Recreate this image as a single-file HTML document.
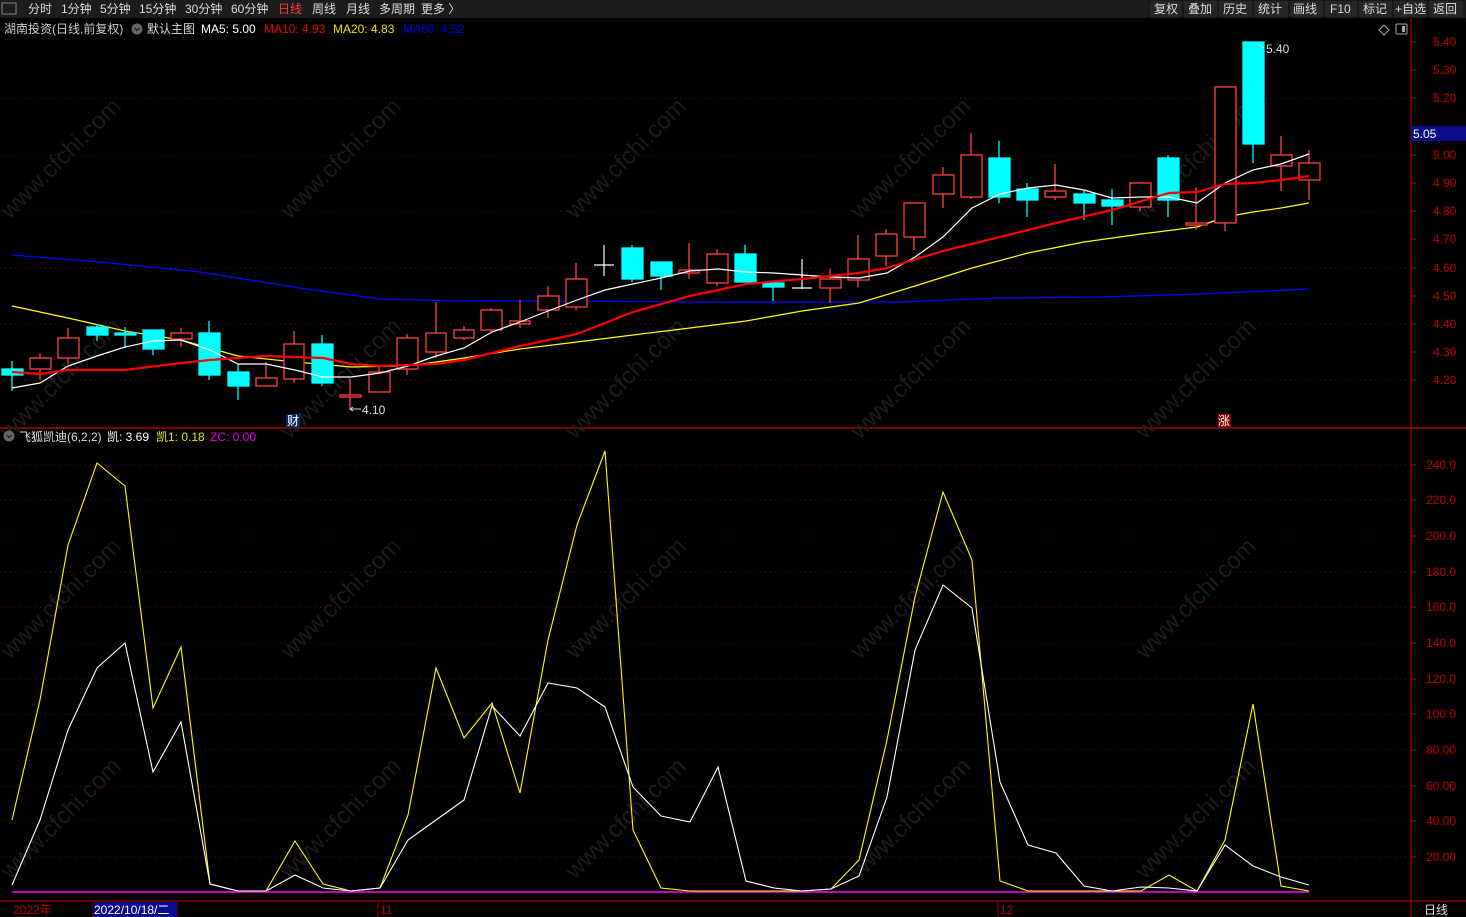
<!DOCTYPE html>
<html><head><meta charset="utf-8"><style>
html,body{margin:0;padding:0;background:#000;width:1466px;height:917px;overflow:hidden;font-family:"Liberation Sans","Noto Sans CJK SC",sans-serif}
svg{display:block}
</style></head><body>
<svg width="1466" height="917" xmlns="http://www.w3.org/2000/svg" font-family="Liberation Sans, Noto Sans CJK SC, sans-serif" font-size="12">
<rect width="1466" height="917" fill="#000"/>
<!-- top bar -->
<rect x="0" y="0" width="1466" height="18" fill="#1c1c1c"/>
<rect x="2" y="3" width="14" height="11" fill="none" stroke="#888"/>
<g fill="#ddd">
<text x="28" y="13">分时</text><text x="61" y="13">1分钟</text><text x="100" y="13">5分钟</text><text x="139" y="13">15分钟</text><text x="185" y="13">30分钟</text><text x="231" y="13">60分钟</text><text x="278" y="13" fill="#ff3b3b">日线</text><text x="312" y="13">周线</text><text x="346" y="13">月线</text><text x="379" y="13">多周期</text><text x="421" y="13">更多 〉</text>
</g>
<g fill="#262626" stroke="#0a0a0a">
<rect x="1149" y="0" width="34" height="18"/><rect x="1183" y="0" width="35" height="18"/><rect x="1218" y="0" width="35" height="18"/><rect x="1253" y="0" width="36" height="18"/><rect x="1289" y="0" width="35" height="18"/><rect x="1324" y="0" width="34" height="18"/><rect x="1358" y="0" width="35" height="18"/><rect x="1393" y="0" width="35" height="18"/><rect x="1428" y="0" width="36" height="18"/>
</g>
<g fill="#ddd"><text x="1154" y="13">复权</text><text x="1188" y="13">叠加</text><text x="1223" y="13">历史</text><text x="1258" y="13">统计</text><text x="1293" y="13">画线</text><text x="1330" y="13">F10</text><text x="1363" y="13">标记</text><text x="1395" y="13">+自选</text><text x="1433" y="13">返回</text></g>
<!-- header line -->
<text x="4" y="33" fill="#ccc">湖南投资(日线,前复权)</text>
<circle cx="137" cy="29" r="5.5" fill="#666"/><path d="M134.5 28l2.5 2.5 2.5-2.5" stroke="#222" stroke-width="1.3" fill="none"/>
<text x="147" y="33" fill="#ddd">默认主图</text>
<text x="201" y="33" fill="#fff">MA5: 5.00</text>
<text x="264" y="33" fill="#e00">MA10: 4.93</text>
<text x="333" y="33" fill="#e6e600">MA20: 4.83</text>
<text x="403" y="33" fill="#0000e6">MA60: 4.52</text>
<path d="M1384 25l5 5-5 5-5-5z" fill="none" stroke="#aaa"/>
<rect x="1396" y="24" width="11" height="10" rx="1" fill="none" stroke="#aaa"/><rect x="1402" y="26" width="3" height="6" fill="#aaa"/>
<!-- axes -->
<line x1="1411" y1="18" x2="1411" y2="917" stroke="#8b0000" stroke-width="1.5"/>
<line x1="0" y1="428" x2="1466" y2="428" stroke="#a00" stroke-width="1.5"/>
<line x1="0" y1="901" x2="1466" y2="901" stroke="#8b0000" stroke-width="1.5"/>
<!-- price grid -->
<g stroke="#8b0000" stroke-dasharray="1 4">
<line x1="0" y1="98" x2="1410" y2="98"/><line x1="0" y1="155" x2="1410" y2="155"/><line x1="0" y1="211" x2="1410" y2="211"/><line x1="0" y1="268" x2="1410" y2="268"/><line x1="0" y1="324" x2="1410" y2="324"/><line x1="0" y1="380" x2="1410" y2="380"/>
<line x1="0" y1="465" x2="1410" y2="465"/><line x1="0" y1="500" x2="1410" y2="500"/><line x1="0" y1="536" x2="1410" y2="536"/><line x1="0" y1="572" x2="1410" y2="572"/><line x1="0" y1="607" x2="1410" y2="607"/><line x1="0" y1="643" x2="1410" y2="643"/><line x1="0" y1="679" x2="1410" y2="679"/><line x1="0" y1="714" x2="1410" y2="714"/><line x1="0" y1="750" x2="1410" y2="750"/><line x1="0" y1="786" x2="1410" y2="786"/><line x1="0" y1="821" x2="1410" y2="821"/><line x1="0" y1="857" x2="1410" y2="857"/>
</g>
<g fill="#c00000" font-size="12">
<text x="1433" y="46">5.40</text><text x="1433" y="74">5.30</text><text x="1433" y="102">5.20</text><text x="1433" y="187">4.90</text><text x="1433" y="159">5.00</text><text x="1433" y="215">4.80</text><text x="1433" y="243">4.70</text><text x="1433" y="272">4.60</text><text x="1433" y="300">4.50</text><text x="1433" y="328">4.40</text><text x="1433" y="356">4.30</text><text x="1433" y="384">4.20</text>
<text x="1426" y="469">240.0</text><text x="1426" y="504">220.0</text><text x="1426" y="540">200.0</text><text x="1426" y="576">180.0</text><text x="1426" y="611">160.0</text><text x="1426" y="647">140.0</text><text x="1426" y="683">120.0</text><text x="1426" y="718">100.0</text><text x="1426" y="754">80.00</text><text x="1426" y="790">60.00</text><text x="1426" y="825">40.00</text><text x="1426" y="861">20.00</text>
</g>
<g stroke="#c00000"><line x1="1411" y1="42" x2="1416" y2="42"/><line x1="1411" y1="70" x2="1416" y2="70"/><line x1="1411" y1="98" x2="1416" y2="98"/><line x1="1411" y1="155" x2="1416" y2="155"/><line x1="1411" y1="183" x2="1416" y2="183"/><line x1="1411" y1="211" x2="1416" y2="211"/><line x1="1411" y1="239" x2="1416" y2="239"/><line x1="1411" y1="268" x2="1416" y2="268"/><line x1="1411" y1="296" x2="1416" y2="296"/><line x1="1411" y1="324" x2="1416" y2="324"/><line x1="1411" y1="352" x2="1416" y2="352"/><line x1="1411" y1="380" x2="1416" y2="380"/>
<line x1="1411" y1="465" x2="1416" y2="465"/><line x1="1411" y1="500" x2="1416" y2="500"/><line x1="1411" y1="536" x2="1416" y2="536"/><line x1="1411" y1="572" x2="1416" y2="572"/><line x1="1411" y1="607" x2="1416" y2="607"/><line x1="1411" y1="643" x2="1416" y2="643"/><line x1="1411" y1="679" x2="1416" y2="679"/><line x1="1411" y1="714" x2="1416" y2="714"/><line x1="1411" y1="750" x2="1416" y2="750"/><line x1="1411" y1="786" x2="1416" y2="786"/><line x1="1411" y1="821" x2="1416" y2="821"/><line x1="1411" y1="857" x2="1416" y2="857"/></g>
<rect x="1411" y="126" width="55" height="15" fill="#0a0a8c"/><text x="1413" y="138" fill="#fff">5.05</text>
<!-- watermarks -->
<g fill="#1c1c1c" font-size="24" >
<text transform="translate(10,220) rotate(-45)">www.cfchi.com</text><text transform="translate(290,220) rotate(-45)">www.cfchi.com</text><text transform="translate(575,220) rotate(-45)">www.cfchi.com</text><text transform="translate(860,220) rotate(-45)">www.cfchi.com</text><text transform="translate(1145,220) rotate(-45)">www.cfchi.com</text>
<text transform="translate(10,440) rotate(-45)">www.cfchi.com</text><text transform="translate(290,440) rotate(-45)">www.cfchi.com</text><text transform="translate(575,440) rotate(-45)">www.cfchi.com</text><text transform="translate(860,440) rotate(-45)">www.cfchi.com</text><text transform="translate(1145,440) rotate(-45)">www.cfchi.com</text>
<text transform="translate(10,660) rotate(-45)">www.cfchi.com</text><text transform="translate(290,660) rotate(-45)">www.cfchi.com</text><text transform="translate(575,660) rotate(-45)">www.cfchi.com</text><text transform="translate(860,660) rotate(-45)">www.cfchi.com</text><text transform="translate(1145,660) rotate(-45)">www.cfchi.com</text>
<text transform="translate(10,880) rotate(-45)">www.cfchi.com</text><text transform="translate(290,880) rotate(-45)">www.cfchi.com</text><text transform="translate(575,880) rotate(-45)">www.cfchi.com</text><text transform="translate(860,880) rotate(-45)">www.cfchi.com</text><text transform="translate(1145,880) rotate(-45)">www.cfchi.com</text>
</g>
<!-- MA60 -->
<polyline fill="none" stroke="#0000ff" stroke-width="1.3" points="12,255 100,262 200,272 300,288 380,299 460,301 560,301 700,302 800,302 900,302 1000,298 1100,297 1200,294 1309,289"/>
<!-- MA20 -->
<polyline fill="none" stroke="#ffff00" stroke-width="1.2" points="12,306 68,318 125,331 181,340 238,356 295,362 351,367 408,366 464,358 520,349 577,342 633,335 690,328 746,321 802,311 859,303 915,286 972,268 1028,253 1084,242 1141,234 1197,227 1225,217 1253,212 1281,208 1309,203"/>
<!-- candles -->
<g stroke="#ff4040" stroke-width="1.3" fill="none">
<line x1="40" y1="353" x2="40" y2="380"/><rect x="30" y="358" width="21" height="11" fill="#000"/>
<line x1="68" y1="328" x2="68" y2="364"/><rect x="58" y="338" width="21" height="20" fill="#000"/>
<line x1="181" y1="328" x2="181" y2="347"/><rect x="171" y="333" width="21" height="6" fill="#000"/>
<line x1="266" y1="362" x2="266" y2="386"/><rect x="256" y="378" width="21" height="8" fill="#000"/>
<line x1="294" y1="331" x2="294" y2="383"/><rect x="284" y="344" width="20" height="35" fill="#000"/>
<line x1="350" y1="379" x2="350" y2="410"/><rect x="340" y="395" width="21" height="2" fill="#000"/>
<line x1="379" y1="367" x2="379" y2="392"/><rect x="369" y="372" width="21" height="20" fill="#000"/>
<line x1="407" y1="334" x2="407" y2="375"/><rect x="397" y="338" width="21" height="31" fill="#000"/>
<line x1="436" y1="302" x2="436" y2="358"/><rect x="426" y="333" width="20" height="19" fill="#000"/>
<line x1="464" y1="326" x2="464" y2="340"/><rect x="454" y="330" width="20" height="8" fill="#000"/>
<line x1="491" y1="308" x2="491" y2="332"/><rect x="481" y="310" width="21" height="20" fill="#000"/>
<line x1="520" y1="300" x2="520" y2="328"/><rect x="510" y="321" width="20" height="3" fill="#000"/>
<line x1="548" y1="286" x2="548" y2="318"/><rect x="538" y="296" width="21" height="14" fill="#000"/>
<line x1="576" y1="263" x2="576" y2="310"/><rect x="566" y="279" width="21" height="28" fill="#000"/>
<line x1="689" y1="243" x2="689" y2="279"/><rect x="679" y="270" width="20" height="3" fill="#000"/>
<line x1="717" y1="249" x2="717" y2="286"/><rect x="707" y="254" width="21" height="29" fill="#000"/>
<line x1="830" y1="269" x2="830" y2="303"/><rect x="820" y="279" width="21" height="9" fill="#000"/>
<line x1="858" y1="235" x2="858" y2="287"/><rect x="848" y="259" width="21" height="21" fill="#000"/>
<line x1="886" y1="229" x2="886" y2="266"/><rect x="876" y="234" width="21" height="22" fill="#000"/>
<line x1="914" y1="203" x2="914" y2="250"/><rect x="904" y="203" width="21" height="34" fill="#000"/>
<line x1="943" y1="167" x2="943" y2="208"/><rect x="933" y="175" width="21" height="19" fill="#000"/>
<line x1="971" y1="133" x2="971" y2="199"/><rect x="961" y="155" width="21" height="42" fill="#000"/>
<line x1="1055" y1="164" x2="1055" y2="200"/><rect x="1045" y="191" width="21" height="6" fill="#000"/>
<line x1="1140" y1="183" x2="1140" y2="211"/><rect x="1130" y="183" width="21" height="24" fill="#000"/>
<line x1="1196" y1="187" x2="1196" y2="230"/><rect x="1186" y="223" width="21" height="2" fill="#000"/>
<line x1="1225" y1="87" x2="1225" y2="231"/><rect x="1215" y="87" width="21" height="136" fill="#000"/>
<line x1="1281" y1="136" x2="1281" y2="191"/><rect x="1271" y="155" width="21" height="11" fill="#000"/>
<line x1="1309" y1="150" x2="1309" y2="200"/><rect x="1299" y="163" width="21" height="17" fill="#000"/>
</g>
<g stroke="#00ffff" stroke-width="1.3" fill="#00ffff">
<line x1="12" y1="361" x2="12" y2="391"/><rect x="2" y="369" width="21" height="6"/>
<line x1="97" y1="324" x2="97" y2="341"/><rect x="87" y="327" width="21" height="8"/>
<line x1="125" y1="327" x2="125" y2="348"/><rect x="115" y="333" width="21" height="2"/>
<line x1="153" y1="330" x2="153" y2="355"/><rect x="143" y="330" width="21" height="19"/>
<line x1="209" y1="321" x2="209" y2="380"/><rect x="199" y="333" width="21" height="42"/>
<line x1="238" y1="364" x2="238" y2="400"/><rect x="228" y="372" width="21" height="14"/>
<line x1="322" y1="335" x2="322" y2="386"/><rect x="312" y="344" width="21" height="39"/>
<line x1="632" y1="245" x2="632" y2="282"/><rect x="622" y="248" width="21" height="31"/>
<line x1="661" y1="262" x2="661" y2="290"/><rect x="651" y="262" width="21" height="14"/>
<line x1="745" y1="245" x2="745" y2="282"/><rect x="735" y="254" width="21" height="28"/>
<line x1="773" y1="283" x2="773" y2="301"/><rect x="763" y="283" width="21" height="4"/>
<line x1="999" y1="141" x2="999" y2="203"/><rect x="989" y="158" width="21" height="39"/>
<line x1="1027" y1="183" x2="1027" y2="217"/><rect x="1017" y="189" width="21" height="11"/>
<line x1="1084" y1="190" x2="1084" y2="220"/><rect x="1074" y="194" width="21" height="9"/>
<line x1="1112" y1="189" x2="1112" y2="225"/><rect x="1102" y="200" width="21" height="6"/>
<line x1="1168" y1="155" x2="1168" y2="217"/><rect x="1158" y="158" width="21" height="42"/>
<line x1="1253" y1="42" x2="1253" y2="163"/><rect x="1243" y="42" width="21" height="102"/>
</g>
<g stroke="#fff" stroke-width="1.2">
<line x1="604" y1="245" x2="604" y2="276"/><line x1="594" y1="265" x2="614" y2="265"/>
<line x1="802" y1="259" x2="802" y2="289"/><line x1="792" y1="288" x2="812" y2="288"/>
</g>
<!-- MA5 -->
<polyline fill="none" stroke="#fff" stroke-width="1.2" points="12,388 40,383 68,366 97,356 125,347 153,341 181,340 210,350 238,364 266,364 295,370 323,377 351,377 380,373 408,366 436,356 464,348 492,332 520,322 548,311 577,300 605,290 633,284 661,278 690,271 718,269 746,272 774,273 802,275 831,277 859,278 887,273 915,257 943,237 972,208 1000,194 1028,188 1056,185 1084,190 1112,198 1141,197 1169,197 1197,203 1225,183 1253,170 1281,164 1309,154"/>
<!-- MA10 -->
<polyline fill="none" stroke="#ff0000" stroke-width="2.2" points="12,372 40,374 68,370 125,370 181,363 210,360 266,356 323,358 351,364 380,366 436,364 464,360 520,346 577,334 633,312 690,296 746,284 802,279 859,273 887,268 943,251 1000,237 1056,223 1112,210 1169,193 1197,192 1225,184 1253,183 1281,180 1309,176"/>
<text x="1266" y="53" fill="#ddd">5.40</text><path d="M1264 48l-7-4" stroke="#ddd"/>
<text x="362" y="414" fill="#ddd">4.10</text><path d="M350 409h11M350 409l3-2M350 409l3 2" stroke="#ddd"/>
<rect x="286" y="414" width="14" height="13" fill="#0a2a6a"/><text x="287" y="425" fill="#fff">财</text>
<rect x="1218" y="414" width="13" height="13" fill="#8b0000"/><text x="1218" y="425" fill="#fff">涨</text>
<!-- indicator header -->
<circle cx="9" cy="436" r="5.5" fill="#666"/><path d="M6.5 435l2.5 2.5 2.5-2.5" stroke="#222" stroke-width="1.3" fill="none"/>
<text x="19" y="441" fill="#ddd">飞狐凯迪(6,2,2)</text>
<text x="107" y="441" fill="#fff">凯: 3.69</text>
<text x="156" y="441" fill="#e6e600">凯1: 0.18</text>
<text x="210" y="441" fill="#e600e6">ZC: 0.00</text>
<!-- indicator lines -->
<line x1="12" y1="892" x2="1309" y2="892" stroke="#ff00ff" stroke-width="1.5"/>
<polyline fill="none" stroke="#ffff00" stroke-width="1.1" points="12,820 40,700 68,545 97,463 125,486 153,708 181,647 210,884 238,891 266,891 295,841 323,884 351,891 380,888 408,815 436,668 464,738 492,703 520,793 548,640 577,525 605,451 633,830 661,888 690,891 718,891 746,891 774,891 802,891 831,889 859,860 887,740 915,597 943,492 972,560 1000,881 1028,891 1056,891 1084,891 1112,891 1141,891 1169,875 1197,891 1225,840 1253,704 1281,886 1309,891"/>
<polyline fill="none" stroke="#fff" stroke-width="1.1" points="12,885 40,820 68,730 97,668 125,643 153,772 181,722 210,884 238,891 266,891 295,875 323,888 351,891 380,888 408,840 436,820 464,800 492,706 520,736 548,683 577,688 605,707 633,787 661,816 690,822 718,767 746,881 774,888 802,891 831,889 859,876 887,797 915,650 943,585 972,608 1000,782 1028,845 1056,853 1084,886 1112,891 1141,887 1169,888 1197,891 1225,845 1253,866 1281,877 1309,885"/>
<!-- date axis -->
<g stroke="#8b0000"><line x1="93" y1="901" x2="93" y2="917"/><line x1="177" y1="901" x2="177" y2="917"/><line x1="378" y1="901" x2="378" y2="917"/><line x1="998" y1="901" x2="998" y2="917"/></g>
<text x="13" y="914" fill="#c00000">2022年</text>
<rect x="94" y="902" width="83" height="15" fill="#0a0a8c"/><text x="94" y="914" fill="#fff">2022/10/18/二</text>
<text x="380" y="914" fill="#c00000">11</text>
<text x="1000" y="914" fill="#c00000">12</text>
<text x="1424" y="914" fill="#ddd">日线</text>
</svg>
</body></html>
